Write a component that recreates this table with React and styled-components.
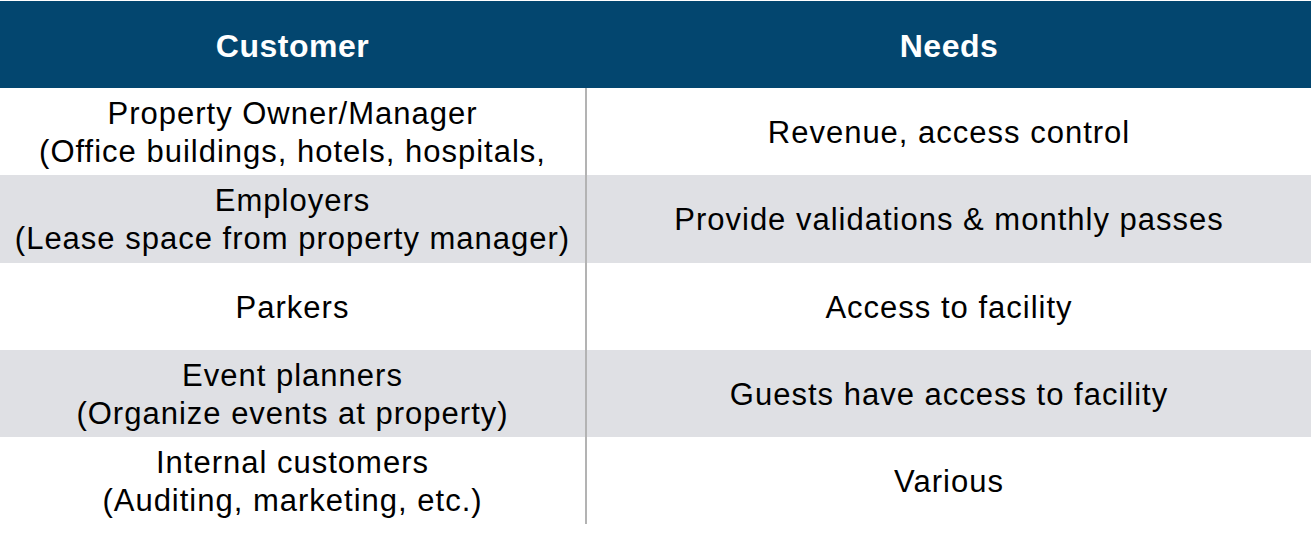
import React from "react";
import styled, { createGlobalStyle } from "styled-components";

const Global = createGlobalStyle`
  html, body { margin: 0; padding: 0; background: #ffffff; }
  body { font-family: "Liberation Sans", Arial, Helvetica, sans-serif; }
`;

const Page = styled.div`
  padding-top: 1px;
  width: 1311px;
`;

const Table = styled.div`
  display: grid;
  grid-template-columns: 585px 1fr;
`;

const HeadCell = styled.div`
  height: 87px;
  box-sizing: border-box;
  padding-top: 3px;
  background: #03466f;
  color: #ffffff;
  font-weight: 700;
  font-size: 32px;
  letter-spacing: 0.5px;
  display: flex;
  align-items: center;
  justify-content: center;
  padding-left: ${(p) => (p.$right ? "2px" : "0")};
`;

const Cell = styled.div`
  height: 87.3px;
  box-sizing: border-box;
  padding-top: 3px;
  background: ${(p) => (p.$shade ? "#dfe0e4" : "#ffffff")};
  border-left: ${(p) => (p.$right ? "2px solid #b3b3b3" : "none")};
  color: #000000;
  font-size: 31px;
  letter-spacing: 1px;
  line-height: 38px;
  display: flex;
  flex-direction: column;
  align-items: center;
  justify-content: center;
  text-align: center;
  white-space: nowrap;
  overflow: hidden;
`;

const Line = styled.span`
  display: block;
`;

const rows = [
  {
    customer: ["Property Owner/Manager", "(Office buildings, hotels, hospitals,"],
    need: "Revenue, access control",
  },
  {
    customer: ["Employers", "(Lease space from property manager)"],
    need: "Provide validations & monthly passes",
  },
  { customer: ["Parkers"], need: "Access to facility" },
  {
    customer: ["Event planners", "(Organize events at property)"],
    need: "Guests have access to facility",
  },
  {
    customer: ["Internal customers", "(Auditing, marketing, etc.)"],
    need: "Various",
  },
];

export default function App() {
  return (
    <Page>
      <Global />
      <Table>
        <HeadCell>Customer</HeadCell>
        <HeadCell $right>Needs</HeadCell>
        {rows.map((r, i) => (
          <React.Fragment key={i}>
            <Cell $shade={i % 2 === 1}>
              {r.customer.map((l, j) => (
                <Line key={j}>{l}</Line>
              ))}
            </Cell>
            <Cell $shade={i % 2 === 1} $right>
              <Line>{r.need}</Line>
            </Cell>
          </React.Fragment>
        ))}
      </Table>
    </Page>
  );
}
